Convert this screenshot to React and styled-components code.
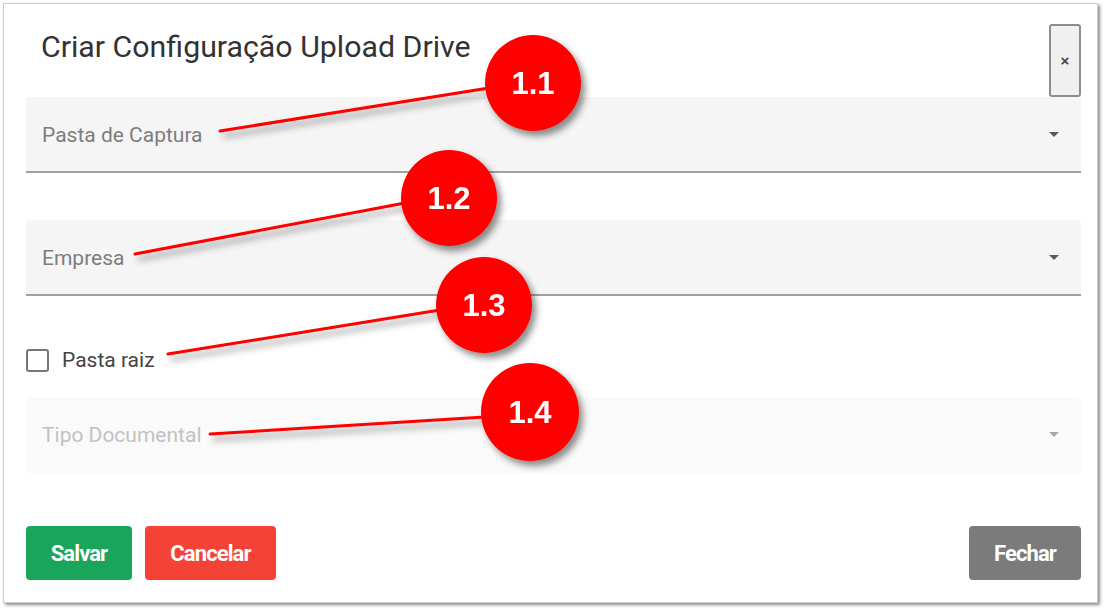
import React from "react";
import styled, { createGlobalStyle } from "styled-components";

const GlobalStyle = createGlobalStyle`
    html, body {
        margin: 0;
        padding: 0;
        background: #ffffff;
    }
    body {
        font-family: Roboto, "Liberation Sans", Arial, sans-serif;
    }
`;

const Page = styled.div`
    position: relative;
    width: 1106px;
    height: 612px;
    padding: 3px;
    box-sizing: border-box;
    overflow: hidden;
`;

const Dialog = styled.div`
    width: 1095px;
    height: 600px;
    box-sizing: border-box;
    border: 1px solid #cdcdcd;
    box-shadow: 2px 2px 3px rgba(0, 0, 0, 0.45);
    background: #ffffff;
    padding: 0 16px 0 22px;
    display: flex;
    flex-direction: column;
`;

const Header = styled.div`
    height: 93px;
    display: flex;
    align-items: flex-start;
    justify-content: space-between;
`;

const Title = styled.h2`
    margin: 25px 0 0 15px;
    font-size: 30.3px;
    line-height: 36px;
    font-weight: 400;
    color: #333333;
`;

const CloseButton = styled.button`
    margin-top: 20px;
    width: 32px;
    height: 73px;
    box-sizing: border-box;
    border: 2px solid #8d8d8d;
    border-radius: 3px;
    background: #f0f0f0;
    color: #444444;
    font-family: "Liberation Sans", Arial, sans-serif;
    font-size: 15px;
    font-weight: 700;
    padding: 0;
    display: flex;
    align-items: center;
    justify-content: center;
`;

const Select = styled.div`
    height: 76px;
    box-sizing: border-box;
    margin-top: ${(p) => p.$top || 0}px;
    background: ${(p) => (p.$disabled ? "#fafafa" : "#f5f5f5")};
    border-bottom: 2px solid ${(p) => (p.$disabled ? "transparent" : "#a0a0a0")};
    border-radius: 4px 4px 0 0;
    padding: 0 22px 0 16px;
    display: flex;
    align-items: center;
    justify-content: space-between;
`;

const SelectLabel = styled.span`
    font-size: 21px;
    color: ${(p) => (p.$disabled ? "#c2c2c2" : "#7d7d7d")};
    margin-top: ${(p) => (p.$disabled ? 1 : 2)}px;
`;

const Caret = styled.span`
    width: 0;
    height: 0;
    border-left: 5.5px solid transparent;
    border-right: 5.5px solid transparent;
    border-top: 5.5px solid ${(p) => (p.$disabled ? "#a8a8a8" : "#5a5a5a")};
`;

const CheckRow = styled.label`
    margin-top: 40px;
    height: 48px;
    display: flex;
    align-items: center;
    gap: 13px;
`;

const Box = styled.span`
    width: 23px;
    height: 23px;
    box-sizing: border-box;
    border: 2px solid #767676;
    border-radius: 3px;
    background: #ffffff;
`;

const CheckText = styled.span`
    font-size: 21px;
    color: #444444;
`;

const Footer = styled.div`
    margin-top: 53px;
    display: flex;
    align-items: center;
    gap: 13px;
`;

const Button = styled.button`
    height: 54px;
    width: ${(p) => p.$width}px;
    margin-left: ${(p) => (p.$push ? "auto" : "0")};
    border: none;
    border-radius: 4px;
    background: ${(p) => p.$bg};
    color: #ffffff;
    font-family: Roboto, "Liberation Sans", Arial, sans-serif;
    font-size: 22px;
    font-weight: 700;
    letter-spacing: -0.9px;
    padding: 0;
`;

const Overlay = styled.svg`
    position: absolute;
    left: 0;
    top: 0;
    pointer-events: none;
`;

const callouts = [
    { n: "1.1", cx: 533, cy: 83, r: 48, x1: 220, y1: 131 },
    { n: "1.2", cx: 449, cy: 198, r: 48, x1: 135, y1: 254 },
    { n: "1.3", cx: 484, cy: 305, r: 48, x1: 168, y1: 354 },
    { n: "1.4", cx: 530, cy: 412, r: 49, x1: 210, y1: 434 },
];

const Annotations = () => (
    <Overlay width="1106" height="612" viewBox="0 0 1106 612">
        <defs>
            <filter id="shade" x="-30%" y="-30%" width="160%" height="160%">
                <feDropShadow dx="4" dy="5" stdDeviation="3.5" floodColor="#000" floodOpacity="0.45" />
            </filter>
        </defs>
        {callouts.map((c) => (
            <g key={c.n} filter="url(#shade)">
                <line
                    x1={c.x1}
                    y1={c.y1}
                    x2={c.cx - c.r + 4}
                    y2={c.cy + 5}
                    stroke="#ff0000"
                    strokeWidth="3"
                    strokeLinecap="round"
                />
                <circle cx={c.cx} cy={c.cy} r={c.r} fill="#ff0000" />
                <text
                    x={c.cx}
                    y={c.cy + 11}
                    textAnchor="middle"
                    fill="#ffffff"
                    fontFamily="'Liberation Sans', Arial, sans-serif"
                    fontWeight="700"
                    fontSize="31"
                >
                    {c.n}
                </text>
            </g>
        ))}
    </Overlay>
);

const App = () => (
    <>
        <GlobalStyle />
        <Page>
            <Dialog>
                <Header>
                    <Title>Criar Configuração Upload Drive</Title>
                    <CloseButton>×</CloseButton>
                </Header>
                <Select>
                    <SelectLabel>Pasta de Captura</SelectLabel>
                    <Caret />
                </Select>
                <Select $top={47}>
                    <SelectLabel>Empresa</SelectLabel>
                    <Caret />
                </Select>
                <CheckRow>
                    <Box />
                    <CheckText>Pasta raiz</CheckText>
                </CheckRow>
                <Select $top={13} $disabled>
                    <SelectLabel $disabled>Tipo Documental</SelectLabel>
                    <Caret $disabled />
                </Select>
                <Footer>
                    <Button $width={106} $bg="#19a55c">Salvar</Button>
                    <Button $width={131} $bg="#f44336">Cancelar</Button>
                    <Button $width={112} $bg="#7b7b7b" $push>Fechar</Button>
                </Footer>
            </Dialog>
            <Annotations />
        </Page>
    </>
);

export default App;
